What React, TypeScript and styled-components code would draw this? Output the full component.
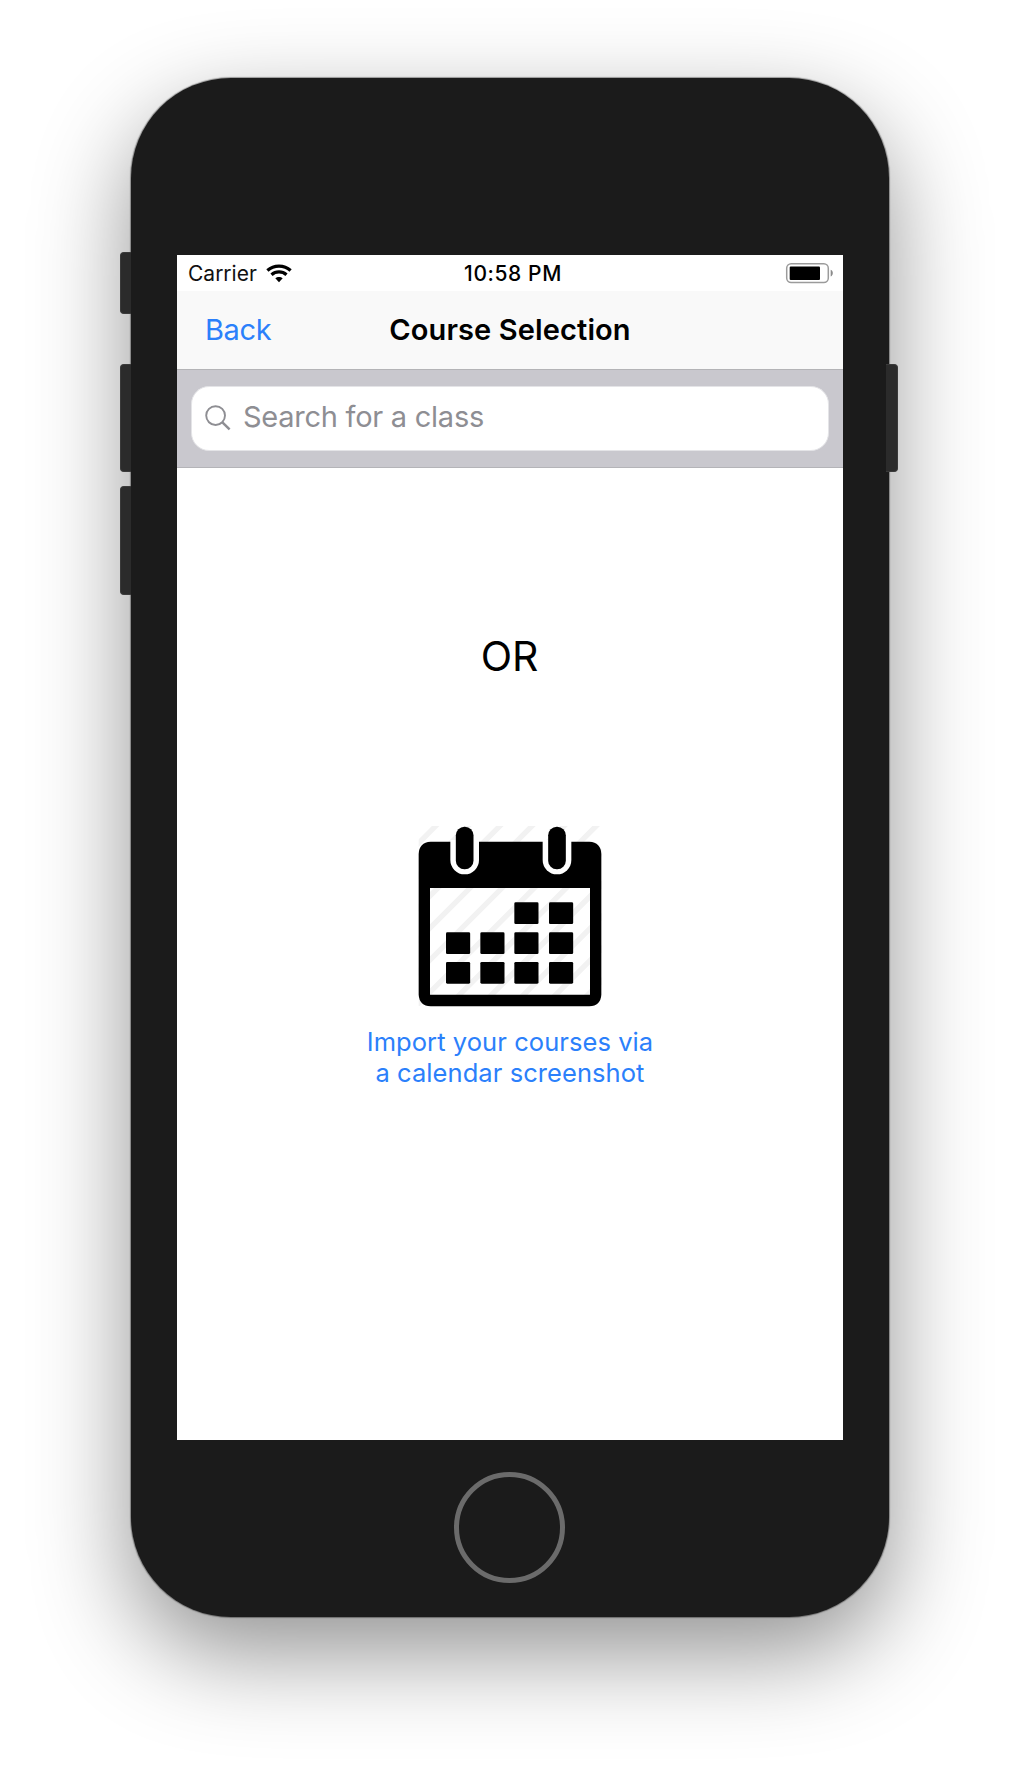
import React from "react";
import styled, { createGlobalStyle } from "styled-components";

const GlobalStyle = createGlobalStyle`
  * { box-sizing: border-box; }
  body { margin: 0; background: #fff; font-family: Inter, "Liberation Sans", sans-serif; }
`;

const Stage = styled.div`
  width: 1020px;
  height: 1768px;
  padding-top: 78px;
  display: flex;
  justify-content: center;
  align-items: flex-start;
  overflow: hidden;
`;

const Rail = styled.div<{ $side: "left" | "right" }>`
  width: 11px;
  display: flex;
  flex-direction: column;
  position: relative;
  z-index: ${(p) => (p.$side === "right" ? 2 : 1)};
  padding-top: ${(p) => (p.$side === "left" ? 174 : 286)}px;
`;

const SideButton = styled.div<{ $h: number; $gap?: number; $side?: "right" }>`
  height: ${(p) => p.$h}px;
  margin-bottom: ${(p) => p.$gap ?? 0}px;
  margin-left: ${(p) => (p.$side ? -3 : 0)}px;
  margin-right: ${(p) => (p.$side ? 2 : 0)}px;
  background: #2b2b2b;
  border: 1px solid #3a3a3a;
  border-radius: ${(p) => (p.$side ? "0 4px 4px 0" : "4px 0 0 4px")};
  border-${(p) => (p.$side ? "left" : "right")}-width: 0;
`;

const Body = styled.div`
  width: 758px;
  height: 1539px;
  padding-top: 177px;
  border-radius: 100px;
  background: #1b1b1b;
  display: flex;
  flex-direction: column;
  align-items: center;
  box-shadow: 0 0 1px 1px rgba(0, 0, 0, 0.35), 0 36px 96px rgba(0, 0, 0, 0.43);
`;

const Screen = styled.div`
  width: 666px;
  height: 1185px;
  flex: none;
  background: #fff;
  color: #000;
  display: flex;
  flex-direction: column;
`;

const StatusBar = styled.div`
  height: 36px;
  padding: 0 9px 0 11px;
  display: grid;
  grid-template-columns: 1fr auto 1fr;
  align-items: center;
  font-size: 21px;
  line-height: 34px;
`;

const Carrier = styled.div`
  display: flex;
  align-items: center;
  gap: 9px;
  color: #111;
`;

const CarrierName = styled.span`
  padding-top: 2px;
`;

const Clock = styled.div`
  padding: 2px 0 0 4px;
  font-weight: 550;
  letter-spacing: 0.6px;
`;

const BatterySlot = styled.div`
  display: flex;
  justify-content: flex-end;
  padding-bottom: 1px;
`;

const NavBar = styled.div`
  height: 79px;
  padding: 0 28px;
  display: grid;
  grid-template-columns: 1fr auto 1fr;
  align-items: center;
  background: #f9f9f9;
  border-bottom: 1px solid #b4b4b7;
  font-size: 29px;
  line-height: 78px;
`;

const BackLink = styled.a`
  color: #2b80fb;
  letter-spacing: -0.4px;
`;

const Title = styled.div`
  font-weight: 600;
  letter-spacing: 0.12px;
`;

const SearchArea = styled.div`
  height: 98px;
  padding: 16px 14px 0;
  background: #c9c8ce;
  border-bottom: 1px solid #b4b4b8;
`;

const SearchField = styled.div`
  height: 65px;
  padding: 0 13px 1px;
  display: flex;
  align-items: center;
  gap: 12px;
  background: #fff;
  border: 1px solid #e4e4e7;
  border-radius: 18px;
`;

const Placeholder = styled.span`
  padding-bottom: 3px;
  color: #8e8e93;
  font-size: 29px;
  line-height: 36px;
  letter-spacing: -0.26px;
`;

const Content = styled.div`
  flex: 1;
  padding-top: 164px;
  display: flex;
  flex-direction: column;
  align-items: center;
`;

const Or = styled.div`
  margin: 0 1px 130px 0;
  font-size: 41px;
  line-height: 48px;
`;

const Import = styled.a`
  display: flex;
  flex-direction: column;
  align-items: center;
  gap: 6px;
  color: #2b80fb;
  font-size: 25.5px;
  line-height: 31px;
  letter-spacing: 0.07px;
  text-align: center;
`;

const HomeButton = styled.div`
  width: 111px;
  height: 111px;
  margin: 31.5px 1px 0 0;
  border: 5px solid #6b6b6b;
  border-radius: 50%;
`;

const Wifi = () => (
  <svg width="26" height="19" viewBox="0 0 26 19" fill="none" stroke="#000" strokeWidth="3.3">
    <path d="M1.4 6.4C7.9.6 18.1.6 24.6 6.4" />
    <path d="M5.5 10.7c4.3-3.7 10.7-3.7 15 0" />
    <path d="M9.3 14.3c2.1-1.9 5.3-1.9 7.4 0L13 18.2z" fill="#000" stroke="none" />
  </svg>
);

const Battery = () => (
  <svg width="49" height="22" viewBox="0 0 49 22">
    <rect x="1.7" y="1.7" width="41.6" height="18.8" rx="4.5" fill="#fff" stroke="#9b9b9b" strokeWidth="1.5" />
    <rect x="4.7" y="4.5" width="30.3" height="13.4" rx="1" fill="#000" />
    <path d="M45.7 7.8c2.8 1 2.8 5.7 0 6.7z" fill="#8b8b8b" />
  </svg>
);

const SearchIcon = () => (
  <svg width="26" height="26" viewBox="0 0 26 26" fill="none" stroke="#8e8e93" strokeWidth="1.9">
    <circle cx="10.6" cy="10.6" r="9.4" />
    <path d="M17.4 17.4l7.2 7" strokeWidth="2.5" />
  </svg>
);

const stripes = Array.from({ length: 11 }, (_, k) => 155 + 96.3 * k);
const cells = [
  [343, 277], [447, 277],
  [138, 367], [241, 367], [343, 367], [447, 367],
  [138, 456], [241, 456], [343, 456], [447, 456],
];

const Calendar = () => (
  <svg width="220" height="210" viewBox="0 0 660 630">
    <defs>
      <clipPath id="art">
        <rect x="56" y="48" width="549" height="540" />
      </clipPath>
    </defs>
    <g clipPath="url(#art)" stroke="#f2f2f2" strokeWidth="16">
      {stripes.map((s) => (
        <path key={s} d={`M${s} 0L${s - 640} 640`} />
      ))}
    </g>
    <path
      fillRule="evenodd"
      d="M92 95H568Q603 97 604 132V554Q602 587 568 589H92Q58 587 56 554V132Q57 97 92 95ZM90 234V554H570V234Z"
    />
    {[194, 471].map((x) => (
      <g key={x}>
        <path d={`M${x - 43} 90V150a43 43 0 0 0 86 0V90Z`} fill="#fff" />
        <rect x={x - 26.5} y="50" width="53" height="128" rx="26" />
      </g>
    ))}
    {cells.map(([x, y]) => (
      <rect key={`${x}-${y}`} x={x} y={y} width="72.5" height="65" rx="4" />
    ))}
  </svg>
);

export default function App() {
  return (
    <>
      <GlobalStyle />
      <Stage>
        <Rail $side="left">
          <SideButton $h={62} $gap={50} />
          <SideButton $h={108} $gap={14} />
          <SideButton $h={109} />
        </Rail>
        <Body>
          <Screen>
            <StatusBar>
              <Carrier>
                <CarrierName>Carrier</CarrierName>
                <Wifi />
              </Carrier>
              <Clock>10:58 PM</Clock>
              <BatterySlot>
                <Battery />
              </BatterySlot>
            </StatusBar>
            <NavBar>
              <BackLink>Back</BackLink>
              <Title>Course Selection</Title>
            </NavBar>
            <SearchArea>
              <SearchField>
                <SearchIcon />
                <Placeholder>Search for a class</Placeholder>
              </SearchField>
            </SearchArea>
            <Content>
              <Or>OR</Or>
              <Import>
                <Calendar />
                <span>
                  Import your courses via
                  <br />a calendar screenshot
                </span>
              </Import>
            </Content>
          </Screen>
          <HomeButton />
        </Body>
        <Rail $side="right">
          <SideButton $h={108} $side="right" />
        </Rail>
      </Stage>
    </>
  );
}
